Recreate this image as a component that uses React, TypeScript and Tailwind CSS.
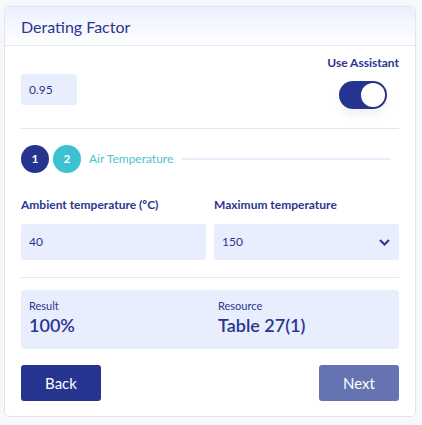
import React from 'react';

const App = () => {
  return (
    <div className="min-h-screen bg-[#f7f8fc] pt-[6px] px-[4px] font-['Lato',sans-serif] text-[#2b3590]">
      <div className="w-[412px] rounded-[5px] border border-[#e3e5ee] bg-white overflow-hidden">
        {/* Header */}
        <div className="h-[39px] bg-gradient-to-b from-[#ecefff] to-white border-b border-[#e5e6ea] px-[16px] flex items-center">
          <h1 className="text-[16px] text-[#2b3590] pt-[2px]">Derating Factor</h1>
        </div>

        <div className="px-[16px] pb-[15px]">
          {/* Factor + assistant */}
          <div className="flex justify-between pt-[9px] h-[83px] border-b border-[#e5e6ea]">
            <div className="pt-[19px]">
              <div className="w-[56px] h-[31px] rounded-[3px] bg-[#e8eefd] flex items-center px-[8px] text-[12px] text-[#2b3590]">
                0.95
              </div>
            </div>
            <div className="flex flex-col items-end">
              <span className="text-[12px] font-bold leading-[16px] text-[#2b3590]">Use Assistant</span>
              <div className="mt-[10px] mr-[12px] w-[48px] h-[28px] rounded-full bg-[#25358f] p-[2px] flex justify-end shadow-[0_6px_10px_rgba(0,0,0,0.06)]">
                <div className="w-[24px] h-[24px] rounded-full bg-white" />
              </div>
            </div>
          </div>

          {/* Stepper */}
          <div className="flex items-center gap-[4px] mt-[16px]">
            <div className="w-[28px] h-[28px] rounded-full bg-[#25358f] text-white text-[12px] font-bold flex items-center justify-center">1</div>
            <div className="w-[28px] h-[28px] rounded-full bg-[#3bc1cf] text-white text-[12px] font-bold flex items-center justify-center">2</div>
            <span className="ml-[4px] text-[12px] text-[#4cc3d0]">Air Temperature</span>
            <div className="ml-[4px] mr-[8px] flex-1 h-[2px] bg-[#e8eefd]" />
          </div>

          {/* Temperature inputs */}
          <div className="grid grid-cols-2 gap-[8px] mt-[24px] pb-[17px] border-b border-[#e5e6ea]">
            <div>
              <div className="text-[12px] font-bold leading-[16px] text-[#2b3590]">Ambient temperature (ºC)</div>
              <div className="mt-[11px] h-[36px] rounded-[3px] bg-[#e8eefd] flex items-center px-[8px] text-[12px] text-[#2b3590]">40</div>
            </div>
            <div>
              <div className="text-[12px] font-bold leading-[16px] text-[#2b3590]">Maximum temperature</div>
              <div className="mt-[11px] h-[36px] rounded-[3px] bg-[#e8eefd] flex items-center justify-between pl-[8px] pr-[9px] text-[12px] text-[#2b3590]">
                <span>150</span>
                <svg width="11" height="7" viewBox="0 0 11 7" fill="none">
                  <path d="M1 1l4.5 4.5L10 1" stroke="#2b3590" strokeWidth="2" />
                </svg>
              </div>
            </div>
          </div>

          {/* Result */}
          <div className="mt-[12px] h-[59px] rounded-[4px] bg-[#e8eefd] grid grid-cols-[189px_1fr] px-[8px] pt-[8px]">
            <div>
              <div className="text-[11px] leading-[16px] text-[#2b3590]">Result</div>
              <div className="text-[18px] font-semibold leading-[22px] text-[#2b3590]">100%</div>
            </div>
            <div>
              <div className="text-[11px] leading-[16px] text-[#2b3590]">Resource</div>
              <div className="text-[18px] font-semibold leading-[22px] text-[#2b3590]">Table 27(1)</div>
            </div>
          </div>

          {/* Actions */}
          <div className="flex justify-between mt-[16px]">
            <button className="w-[80px] h-[36px] rounded-[3px] bg-[#25358f] text-white text-[15px]">Back</button>
            <button className="w-[80px] h-[36px] rounded-[3px] bg-[#6673b1] text-white text-[15px]">Next</button>
          </div>
        </div>
      </div>
    </div>
  );
};

export default App;
